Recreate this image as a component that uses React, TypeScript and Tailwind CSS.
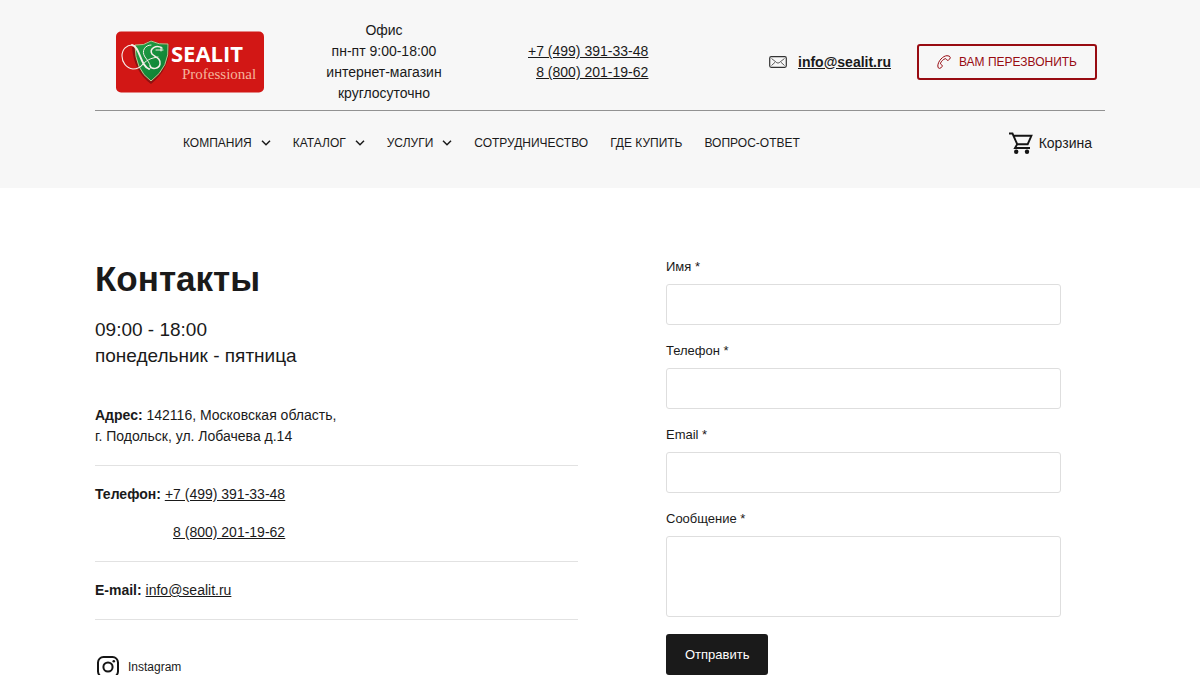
import type { ReactNode } from "react";

function Logo() {
  return (
    <svg viewBox="0 0 148 62" className="h-[62px] w-[148px]" role="img" aria-label="SEALIT Professional">
      <defs>
        <linearGradient id="shield" x1="0" y1="0" x2="1" y2="1">
          <stop offset="0" stopColor="#24a047" />
          <stop offset="1" stopColor="#087a30" />
        </linearGradient>
      </defs>
      <rect width="148" height="61" y="0.5" rx="5" fill="#d21715" />
      <path d="M16 16 Q27 15 34 9 Q43 13 53 13 Q55 37 35 53 Q18 41 16 16Z" fill="#8e1110" />
      <path
        d="M19 14 Q28 15 35 10 Q43 14 52 13 Q54 36 35 50 Q19 39 19 14Z"
        fill="url(#shield)"
        stroke="#b9c78f"
        strokeWidth="1"
      />
      <g fill="none" stroke="#f6eee9" strokeLinecap="round">
        <path d="M27 33 C24 37 21 38 17 38 C10 37 6 31 6 25 C6 18 11 14 16 14" strokeWidth="1.1" />
        <path d="M16 14 C24 15 24 35 33 38" strokeWidth="1.8" />
        <path d="M33 38 C37 38 33 31 29 26 C25 20 29 14 35 14" strokeWidth="1" />
        <path d="M46 17 C40 13 33 18 36 23 C39 26 45 27 44 33 C43 38 36 39 34 35" strokeWidth="1.5" />
        <path d="M27 33 C32 28 36 27 42 26 M40 19 H47 M45 16 V20" strokeWidth="1" />
      </g>
      <text x="55" y="31" fill="#fff" fontSize="22" fontWeight="700" fontFamily="'Open Sans', sans-serif">
        SEALIT
      </text>
      <text x="66" y="48" fill="#f5b49c" fontSize="15" fontFamily="'Liberation Serif', serif">
        Professional
      </text>
    </svg>
  );
}

function Chevron() {
  return (
    <svg viewBox="0 0 10 6" className="h-[6px] w-[10px]" fill="none" stroke="currentColor" strokeWidth="1.5" aria-hidden="true">
      <path d="M1 0.8 L5 4.8 L9 0.8" />
    </svg>
  );
}

function NavItem({ children, menu }: { children: ReactNode; menu?: boolean }) {
  if (menu) {
    return (
      <button type="button" className="flex items-center gap-[9px]">
        {children}
        <Chevron />
      </button>
    );
  }
  return <a href="#">{children}</a>;
}

function Field({ id, label, type = "text" }: { id: string; label: string; type?: string }) {
  return (
    <div className="mb-4">
      <label htmlFor={id} className="mb-[7px] block text-[13px] leading-5">
        {label}
      </label>
      <input id={id} type={type} className="block h-[41px] w-full rounded-[3px] border border-[#dedede] bg-white px-3 text-sm" />
    </div>
  );
}

export default function App() {
  return (
    <div className="bg-white font-['Liberation_Sans',Arial,sans-serif] text-sm leading-[21px] text-[#1a1a1a]">
      <header className="bg-[#f7f7f7] px-6 pb-[34px]">
        <div className="mx-auto max-w-[1010px]">
          <div className="flex items-center border-b border-[#929292] pt-5 pr-2 pb-[6px] pl-[21px]">
            <a href="#" className="shrink-0">
              <Logo />
            </a>
            <p className="ml-[62px] w-[116px] text-center">
              Офис
              <br />
              пн-пт 9:00-18:00
              <br />
              интернет-магазин
              <br />
              круглосуточно
            </p>
            <div className="ml-[86px] flex flex-col items-end underline">
              <a href="tel:+74993913348">+7 (499) 391-33-48</a>
              <a href="tel:88002011962">8 (800) 201-19-62</a>
            </div>
            <a href="mailto:info@sealit.ru" className="ml-auto flex items-center gap-[11px] font-bold">
              <svg viewBox="0 0 18 12" className="h-3 w-[18px]" fill="none" stroke="#333" aria-hidden="true">
                <rect x="0.7" y="0.7" width="16.6" height="10.6" rx="1.5" strokeWidth="1.2" />
                <path d="M2.5 2.5 L7.8 6.7 Q9 7.5 10.2 6.7 L15.5 2.5 M2.5 9.5 L6 6.3 M15.5 9.5 L12 6.3" strokeWidth="0.8" />
              </svg>
              <span className="underline">info@sealit.ru</span>
            </a>
            <button
              type="button"
              className="ml-[26px] flex h-9 w-[180px] items-center justify-center gap-2 rounded-[3px] border-2 border-[#980b12] text-xs text-[#980b12]"
            >
              <svg viewBox="0 0 14 14" className="h-[14px] w-[14px]" fill="none" stroke="currentColor" strokeWidth="1" strokeLinejoin="round" aria-hidden="true">
                <path d="M10 0.7 C6 0.8 1 6 0.8 11 Q0.9 13.4 2.4 13.4 Q4 13.3 5.1 11.5 Q5.7 10 4.3 9.6 Q3.3 9.2 3.5 8.2 C4.2 6.4 6.4 4.2 8.2 3.7 Q9.1 3.5 9.4 4.4 Q10 5.9 11.4 5.1 Q13.3 4 13.3 2.6 Q13 .6 10 .7Z" />
              </svg>
              ВАМ ПЕРЕЗВОНИТЬ
            </button>
          </div>
          <div className="flex items-center justify-between pt-[21px] pr-[13px] pl-[88px]">
            <nav className="flex items-center gap-[22px] text-xs">
              <NavItem menu>КОМПАНИЯ</NavItem>
              <NavItem menu>КАТАЛОГ</NavItem>
              <NavItem menu>УСЛУГИ</NavItem>
              <NavItem>СОТРУДНИЧЕСТВО</NavItem>
              <NavItem>ГДЕ КУПИТЬ</NavItem>
              <NavItem>ВОПРОС-ОТВЕТ</NavItem>
            </nav>
            <a href="#" className="flex items-center gap-[6px]">
              <svg viewBox="0 0 24 22" className="h-[22px] w-6" fill="none" stroke="#151515" strokeWidth="1.9" aria-hidden="true">
                <path d="M0 1.5 H3.5 L8.2 12.2 L6 16 H21 M4.5 3.8 H22.4 L18.7 12.2 H8.2" />
                <circle cx="7.2" cy="19.7" r="2.2" fill="#151515" stroke="none" />
                <circle cx="18" cy="19.7" r="2.2" fill="#151515" stroke="none" />
              </svg>
              Корзина
            </a>
          </div>
        </div>
      </header>

      <main className="px-6 pt-[69px]">
        <div className="mx-auto grid max-w-[1010px] grid-cols-[483fr_395fr] gap-x-[88px] pr-11">
          <section>
            <h1 className="text-[35px] leading-[44px] font-bold">Контакты</h1>
            <p className="mt-4 text-[19px] leading-[26px]">
              09:00 - 18:00
              <br />
              понедельник - пятница
            </p>
            <p className="mt-9 border-b border-[#e2e2e2] pb-[18px]">
              <b>Адрес:</b> 142116, Московская область,
              <br />
              г. Подольск, ул. Лобачева д.14
            </p>
            <div className="flex gap-1 border-b border-[#e2e2e2] py-[18px]">
              <b>Телефон:</b>
              <div className="flex flex-col items-end gap-[17px] underline">
                <a href="tel:+74993913348">+7 (499) 391-33-48</a>
                <a href="tel:88002011962">8 (800) 201-19-62</a>
              </div>
            </div>
            <p className="border-b border-[#e2e2e2] py-[18px]">
              <b>E-mail:</b>{" "}
              <a href="mailto:info@sealit.ru" className="underline">
                info@sealit.ru
              </a>
            </p>
            <a href="#" className="mt-9 flex items-center gap-[9px] pl-[2px] text-xs">
              <svg viewBox="0 0 22 22" className="h-[22px] w-[22px]" fill="none" stroke="#151515" strokeWidth="2" aria-hidden="true">
                <rect x="1" y="1" width="20" height="20" rx="5.5" />
                <circle cx="11" cy="11" r="4.6" />
                <circle cx="16.8" cy="5.2" r="1.3" fill="#151515" stroke="none" />
              </svg>
              Instagram
            </a>
          </section>

          <form onSubmit={(event) => event.preventDefault()}>
            <Field id="name" label="Имя *" />
            <Field id="phone" label="Телефон *" type="tel" />
            <Field id="email" label="Email *" type="email" />
            <label htmlFor="message" className="mb-[7px] block text-[13px] leading-5">
              Сообщение *
            </label>
            <textarea id="message" className="block h-[81px] w-full resize-none rounded-[3px] border border-[#dedede] bg-white p-3" />
            <button type="submit" className="mt-[17px] h-[41px] rounded-[3px] bg-[#1a1a1a] px-[19px] text-[13px] text-white">
              Отправить
            </button>
          </form>
        </div>
      </main>
    </div>
  );
}
